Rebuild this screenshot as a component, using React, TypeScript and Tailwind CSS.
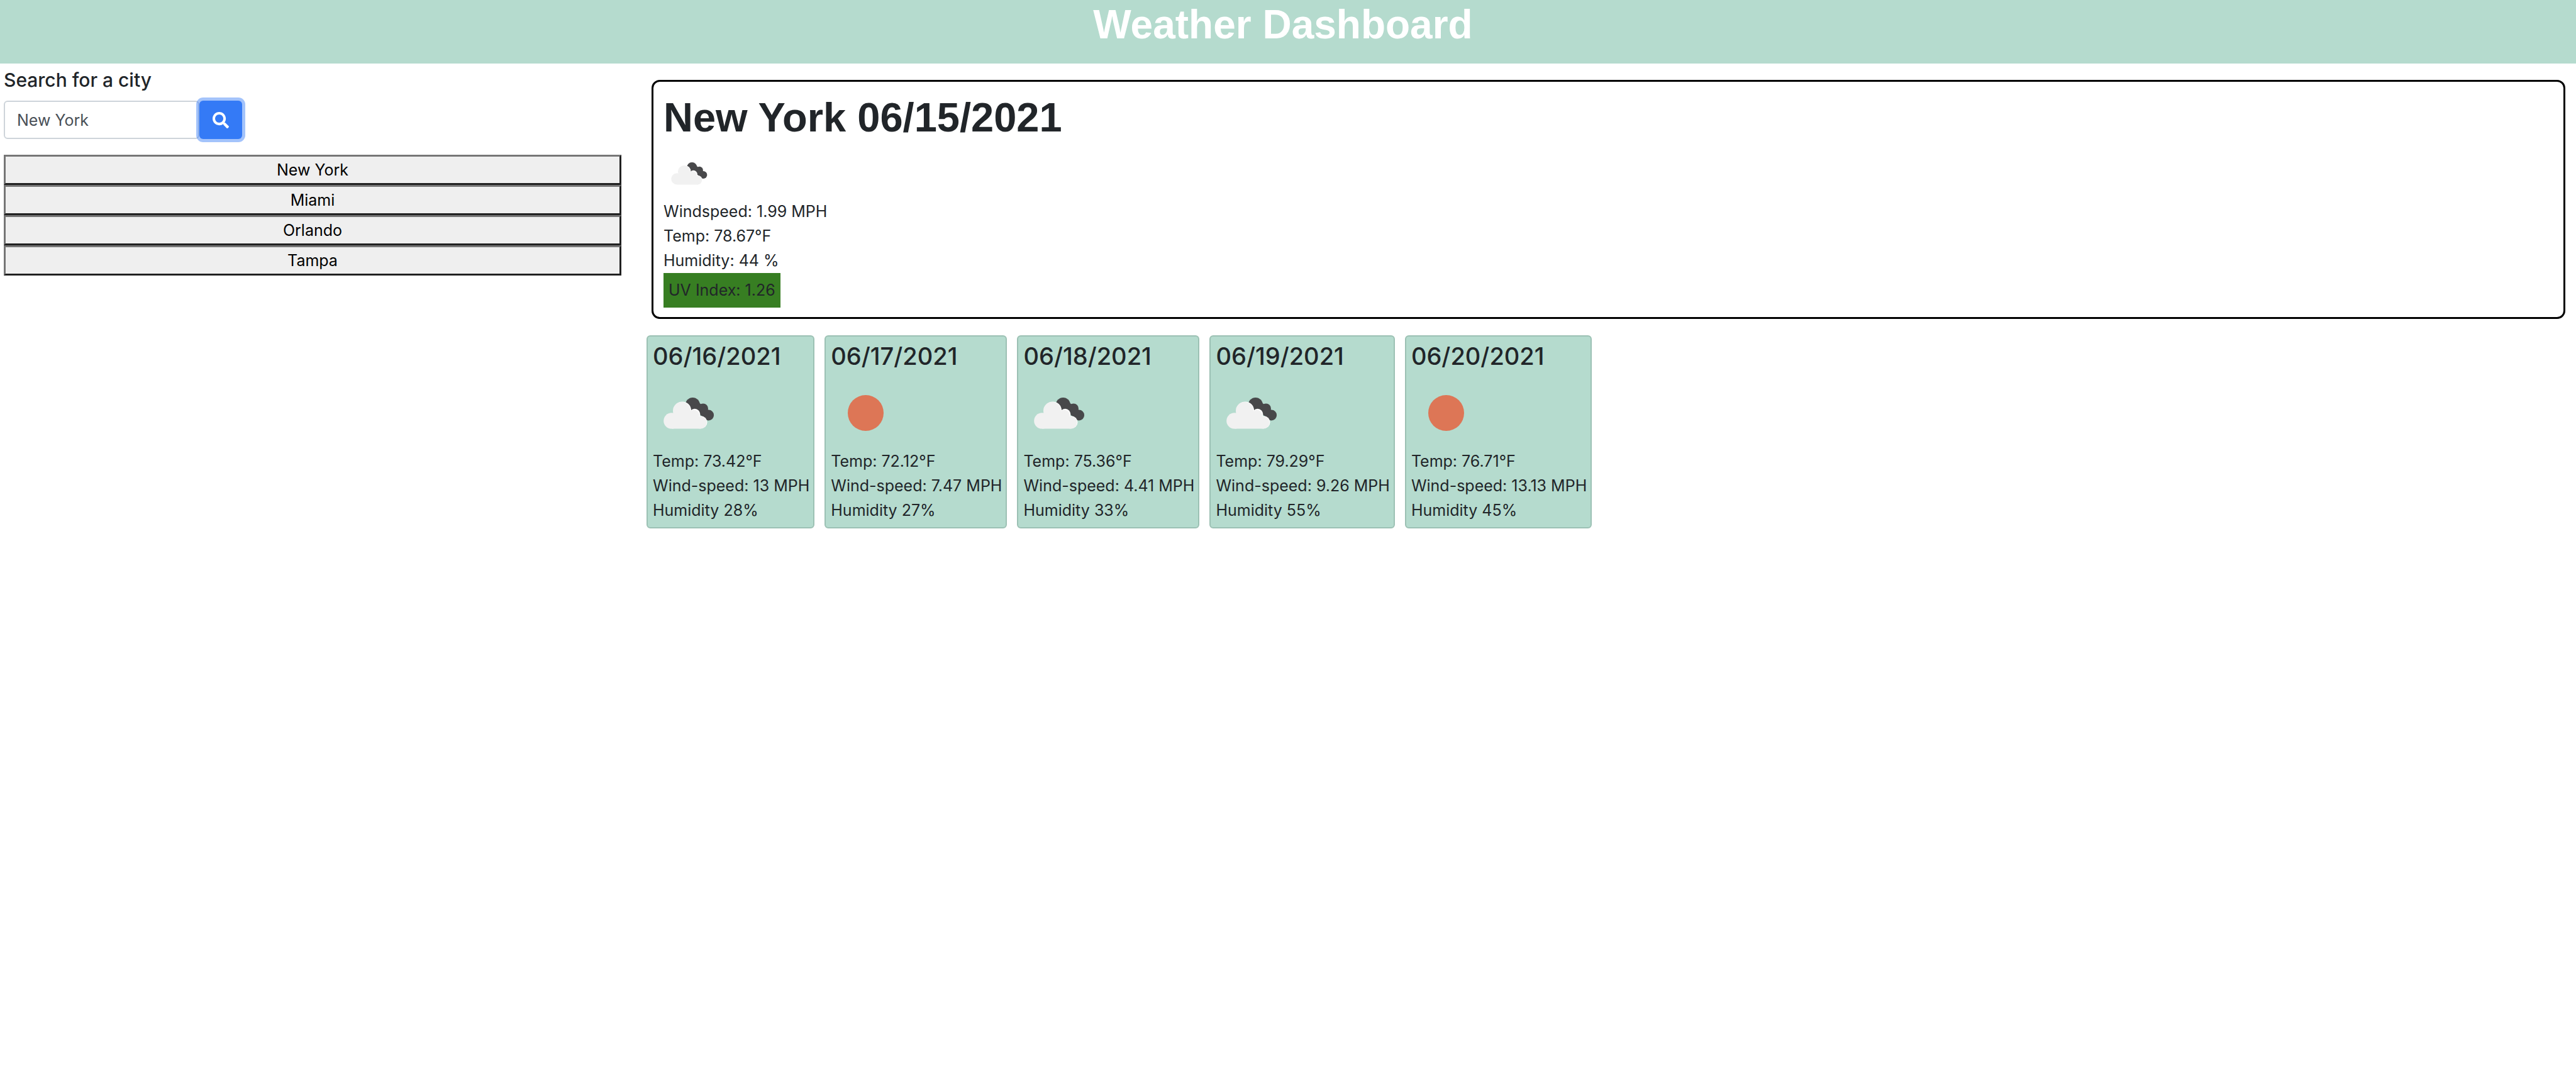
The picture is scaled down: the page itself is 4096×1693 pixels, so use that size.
import { FaSearch } from 'react-icons/fa';

const cities = ['New York', 'Miami', 'Orlando', 'Tampa'];

const forecast = [
  { date: '06/16/2021', icon: 'clouds', temp: '73.42', wind: '13', humidity: 28 },
  { date: '06/17/2021', icon: 'sun', temp: '72.12', wind: '7.47', humidity: 27 },
  { date: '06/18/2021', icon: 'clouds', temp: '75.36', wind: '4.41', humidity: 33 },
  { date: '06/19/2021', icon: 'clouds', temp: '79.29', wind: '9.26', humidity: 55 },
  { date: '06/20/2021', icon: 'sun', temp: '76.71', wind: '13.13', humidity: 45 },
];

function WeatherIcon({ kind, className }: { kind: string; className: string }) {
  return (
    <svg viewBox="0 0 112 125" className={className} role="img" aria-label={kind}>
      {kind === 'sun' ? (
        <circle cx="55.5" cy="67.5" r="28.5" fill="#dd7656" />
      ) : (
        <>
          <g fill="#48484a">
            <circle cx="63.4" cy="54.5" r="11.5" />
            <circle cx="80" cy="60.4" r="8" />
            <circle cx="88.6" cy="70.9" r="8.5" />
            <path d="M60 60L72 50L90 64L86 78Z" />
          </g>
          <g fill="#fff">
            <circle cx="47" cy="63.4" r="14" />
            <circle cx="66.6" cy="69.6" r="8.8" />
            <circle cx="76.5" cy="82.2" r="10" />
          </g>
          <g fill="#f1f1f1">
            <circle cx="29.9" cy="79.9" r="12.7" />
            <circle cx="46" cy="64" r="14" />
            <circle cx="65.4" cy="71" r="8.6" />
            <circle cx="75.7" cy="82.8" r="9.8" />
            <path d="M29.900 92.600V76L40 68H66L74 76L76 92.600Z" />
          </g>
        </>
      )}
    </svg>
  );
}

export default function App() {
  return (
    <div className="min-h-screen bg-white font-['Inter','Liberation_Sans',sans-serif] text-[25px] leading-[39px] text-[#212529]">
      <header className="h-[101px] bg-[#b5dbce] pr-[16px] text-center font-['Liberation_Sans',sans-serif] text-white">
        <h1 className="text-[64px] leading-[79px] font-bold">Weather Dashboard</h1>
      </header>
      <div className="flex">
        <aside className="w-1/4 pt-[7px] pr-[36px] pl-[6px]">
          <form onSubmit={(e) => e.preventDefault()}>
            <label htmlFor="city" className="block text-[30px] leading-[39px] font-medium">
              Search for a city
            </label>
            <div className="mt-[13px] flex">
              <input
                id="city"
                type="text"
                defaultValue="New York"
                className="h-[61px] w-[311px] rounded-[6px] border-2 border-[#ced4da] bg-white px-[19px] text-[#495057]"
              />
              <button
                type="submit"
                aria-label="Search"
                className="flex h-[61px] w-[68px] items-center justify-center rounded-[6px] bg-[#347af6] text-white ring-[5px] ring-[#347af6]/45"
              >
                <FaSearch size={26} />
              </button>
            </div>
          </form>
          <div className="mt-[25px] flex flex-col">
            {cities.map((city) => (
              <button
                key={city}
                type="button"
                className="h-[48px] border-[3px] border-t-[#767676] border-r-[#212121] border-b-[#212121] border-l-[#767676] bg-[#efefef] text-center leading-[39px] text-black"
              >
                {city}
              </button>
            ))}
          </div>
        </aside>
        <main className="w-3/4">
          <section className="mt-[26px] mr-[17px] ml-[12px] rounded-[13px] border-[3px] border-black px-[16px] pt-[17px] pb-[15px]">
            <h2 className="font-['Liberation_Sans',sans-serif] text-[65px] leading-[79px] font-bold">
              New York 06/15/2021
            </h2>
            <WeatherIcon kind="clouds" className="mt-[1px] h-[90px] w-[80px]" />
            <p>Windspeed: 1.99 MPH</p>
            <p>Temp: 78.67°F</p>
            <p>Humidity: 44 %</p>
            <p className="w-fit bg-[#377e22] p-[8px]">UV Index: 1.26</p>
          </section>
          <section className="mt-[26px] ml-[4px] flex gap-[16px]">
            {forecast.map((day) => (
              <article
                key={day.date}
                className="rounded-[6px] border-2 border-[#9cc1b4] bg-[#b5dbce] pt-[8px] pr-[6px] pb-[7px] pl-[8px]"
              >
                <h3 className="text-[38px] leading-[46px] font-medium">{day.date}</h3>
                <WeatherIcon kind={day.icon} className="h-[125px] w-[112px]" />
                <p>Temp: {day.temp}°F</p>
                <p>Wind-speed: {day.wind} MPH</p>
                <p>Humidity {day.humidity}%</p>
              </article>
            ))}
          </section>
        </main>
      </div>
    </div>
  );
}
